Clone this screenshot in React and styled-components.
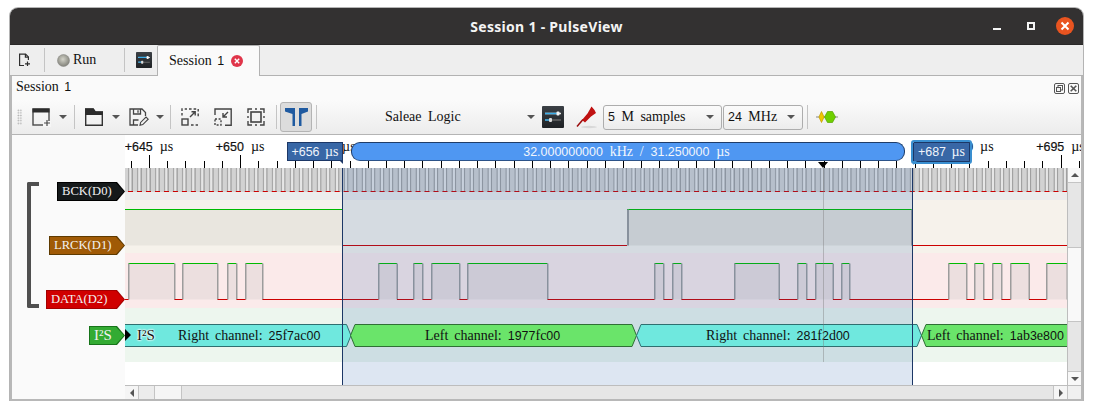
import React from 'react'
import styled, { createGlobalStyle } from 'styled-components'

const GlobalStyle = createGlobalStyle`
  html, body { margin: 0; padding: 0; background: #fff; }
  body { font-family: "Liberation Serif", serif; font-size: 14px; color: #111; overflow: hidden; }
`

// ---- qt-ish text, letters in serif, digits in sans, wide word gaps
const Digits = styled.span`
  font-family: "Liberation Sans", sans-serif;
  font-size: 0.89em;
`

const Txt = ({ children }) => (
  <>
    {String(children)
      .split(/([0-9+.]+)/)
      .map((part, i) => (i % 2 ? <Digits key={i}>{part}</Digits> : part))}
  </>
)

// ---- window
const Window = styled.div`
  position: relative;
  width: 1073px;
  height: 393px;
  margin: 8px 0 0 10px;
  border-radius: 8px 8px 0 0;
  box-shadow: 0 0 0 1px #b4b4b4;
  display: flex;
  flex-direction: column;
  overflow: hidden;
  word-spacing: 3px;
`

const TitleBar = styled.div`
  height: 37px;
  flex: none;
  background: #333131;
  border-bottom: 1px solid #2a2828;
  position: relative;
  display: flex;
  align-items: center;
  justify-content: center;
  box-sizing: border-box;
  color: #f4f4f4;
  font-family: "Noto Sans", sans-serif;
  font-weight: 700;
  font-size: 14px;
  letter-spacing: 0.3px;
  word-spacing: 0;
`

const WinControls = styled.div`
  position: absolute;
  right: 9px;
  top: 0;
  height: 36px;
  display: flex;
  align-items: center;
  gap: 21px;
`

const MinBtn = styled.span`
  width: 8px;
  height: 2px;
  margin-top: 5px;
  background: #f4f4f4;
`

const MaxBtn = styled.span`
  margin-left: 5px;
  border: 2px solid #f4f4f4;
  width: 4px;
  height: 4px;
`

const CloseBtn = styled.span`
  width: 18px;
  height: 18px;
  border-radius: 50%;
  background: #e95420;
  display: flex;
  align-items: center;
  justify-content: center;
`

const MainBar = styled.div`
  height: 31px;
  flex: none;
  box-sizing: border-box;
  background: #eeeeee;
  border-bottom: 1px solid #b2b2b2;
  display: flex;
  align-items: center;
  position: relative;
`

const RunButton = styled.div`
  display: flex;
  align-items: center;
  gap: 3px;
  width: 79px;
  padding-left: 12px;
  box-sizing: border-box;
  font-size: 14px;
`

const VSep = styled.span`
  width: 1px;
  flex: none;
  height: ${(p) => p.$h || 24}px;
  background: #c4c4c4;
  margin: ${(p) => p.$m || '0'};
`

const Tab = styled.div`
  width: 103px;
  height: 31px;
  margin-left: 5px;
  margin-bottom: -1px;
  box-sizing: border-box;
  background: #fafafa;
  border: 1px solid #b2b2b2;
  border-bottom: none;
  border-radius: 2px 2px 0 0;
  display: flex;
  align-items: center;
  padding-left: 11px;
  gap: 7px;
  font-size: 14px;
  z-index: 1;
  word-spacing: 2px;
`

const Panel = styled.div`
  flex: 1;
  min-height: 0;
  display: flex;
  flex-direction: column;
  border: 2px solid #b8b8b8;
  border-top: none;
  background: #fafafa;
`

const PanelHeader = styled.div`
  height: 24px;
  flex: none;
  box-sizing: border-box;
  display: flex;
  align-items: center;
  justify-content: space-between;
  padding: 0 2px 2px 4px;
  background: #fafafa;
  font-size: 14px;
  word-spacing: 2px;
`

const DockBtns = styled.div`
  display: flex;
  gap: 3px;
  margin-top: 2px;
`

const Toolbar = styled.div`
  height: 35px;
  flex: none;
  box-sizing: border-box;
  display: flex;
  align-items: center;
  border-bottom: 1px solid #b4b4b4;
  background: linear-gradient(#fbfbfb, #ececec);
  padding-left: 5px;
`

const Grip = styled.span`
  width: 5px;
  height: 16px;
  margin-right: 10px;
  flex: none;
  background-image: radial-gradient(circle, #a8a8a8 0.6px, transparent 1px);
  background-size: 2.6px 2.6px;
`

const Arrow = styled.span`
  width: 0;
  height: 0;
  flex: none;
  border-left: 4px solid transparent;
  border-right: 4px solid transparent;
  border-top: 4px solid #555;
  margin: ${(p) => p.$m || '0'};
`

const ToolIcon = styled.span`
  display: flex;
  flex: none;
  margin: ${(p) => p.$m || '0'};
`

const Toggled = styled.span`
  width: 32px;
  height: 30px;
  flex: none;
  box-sizing: border-box;
  display: flex;
  align-items: center;
  justify-content: center;
  background: #dcdcdc;
  border: 1px solid #b4b4b4;
  border-radius: 3px;
  margin: 0 4px 0 3px;
`

const DeviceSelect = styled.div`
  width: 150px;
  margin-left: 68px;
  margin-right: 7px;
  display: flex;
  align-items: center;
  justify-content: space-between;
  font-size: 14px;
  flex: none;
`

const Combo = styled.div`
  width: ${(p) => p.$w}px;
  height: 25px;
  flex: none;
  margin-left: ${(p) => p.$ml || 0}px;
  box-sizing: border-box;
  border: 1px solid #adadad;
  border-radius: 3px;
  background: linear-gradient(#fbfbfb, #ececec);
  display: flex;
  align-items: center;
  justify-content: space-between;
  padding: 0 7px 0 4px;
  font-size: 14px;
`

// ---- trace view
const View = styled.div`
  flex: 1;
  min-height: 0;
  position: relative;
  display: grid;
  grid-template-columns: 1fr 14px;
  grid-template-rows: 33px 217px 1fr;
`

const Ruler = styled.div`
  grid-column: 1 / 3;
  background: #fff;
  position: relative;
  margin-left: 113px;
  overflow: hidden;
`

const RulerTicks = styled.svg`
  position: absolute;
  left: 0;
  top: 0;
`

const TickLabel = styled.span`
  position: absolute;
  top: 4px;
  transform: translateX(-50%);
  white-space: nowrap;
  font-size: 14px;
  word-spacing: 2px;
  color: #111;
  -webkit-text-stroke: 0.2px #111;
`

const Unit = styled.span`
  font-family: "Liberation Serif", serif;
  margin-left: 7px;
  -webkit-text-stroke: 0;
`

const Rows = styled.div`
  position: relative;
  display: flex;
  flex-direction: column;
`

const Row = styled.div`
  height: ${(p) => p.$h}px;
  flex: none;
  display: grid;
  grid-template-columns: 113px 1fr;
`

const HeaderCell = styled.div`
  background: #fafafa;
  display: flex;
  justify-content: flex-end;
  align-items: flex-start;
  padding-top: ${(p) => p.$top}px;
  position: relative;
`

const Label = styled.div`
  height: 19px;
  width: ${(p) => p.$w}px;
  position: relative;
  background: ${(p) => p.$edge};
  clip-path: polygon(0 0, calc(100% - 8px) 0, 100% 50%, calc(100% - 8px) 100%, 0 100%);
  color: #f2f2f2;
  font-size: ${(p) => p.$fs || 12.6}px;
  line-height: 19px;
  word-spacing: 0;
  padding-left: 5px;
  box-sizing: border-box;
  z-index: 2;
  white-space: nowrap;

  &::before {
    content: '';
    position: absolute;
    inset: 1px;
    background: ${(p) => p.$bg};
    clip-path: polygon(0 0, calc(100% - 8px) 0, 100% 50%, calc(100% - 8px) 100%, 0 100%);
  }

  span.t {
    position: relative;
  }
`

const Band = styled.div`
  background: ${(p) => p.$bg};
  position: relative;
  overflow: hidden;
`

const Wave = styled.svg`
  position: absolute;
  left: 0;
  top: 0;
`

const Annot = styled.div`
  position: absolute;
  top: 16px;
  height: 23px;
  font-size: 14px;
  line-height: 23px;
  word-spacing: 2.5px;
  white-space: nowrap;
  z-index: 3;

  svg {
    position: absolute;
    left: 0;
    top: 0;
  }

  span.t {
    position: absolute;
    top: 0;
  }
`

const DecoderMark = styled.span`
  position: absolute;
  left: 0;
  top: 21px;
  width: 0;
  height: 0;
  border-top: 6px solid transparent;
  border-bottom: 6px solid transparent;
  border-left: 6px solid #000;
  z-index: 4;
`

const DecoderName = styled.span`
  position: absolute;
  left: 12px;
  top: 16px;
  font-size: 15px;
  line-height: 23px;
  z-index: 4;
  text-shadow: 0 0 2px #fff, 0 0 2px #fff, 0 0 2px #fff, 0 0 2px #fff;
`

const Selection = styled.div`
  position: absolute;
  left: 330px;
  top: 33px;
  width: 571px;
  height: 217px;
  background: rgba(28, 88, 168, 0.15);
  pointer-events: none;
  z-index: 2;
`

const SelectionEdge = styled.div`
  position: absolute;
  left: ${(p) => p.$x}px;
  top: 33px;
  width: 1px;
  height: 217px;
  background: #1c3766;
  z-index: 3;
`

const CursorLine = styled.div`
  position: absolute;
  left: 811px;
  top: 33px;
  width: 1px;
  height: 194px;
  background: rgba(120, 120, 120, 0.4);
  z-index: 3;
`

const CursorMark = styled.div`
  position: absolute;
  left: 806px;
  top: 27px;
  width: 0;
  height: 0;
  border-left: 5.5px solid transparent;
  border-right: 5.5px solid transparent;
  border-top: 6px solid #000;
  z-index: 3;
`

const Flag = styled.div`
  position: absolute;
  left: ${(p) => p.$x}px;
  top: ${(p) => p.$y}px;
  width: ${(p) => p.$w}px;
  height: ${(p) => p.$h}px;
  box-sizing: border-box;
  background: #3867a6;
  color: #f0f4fa;
  font-size: 14px;
  line-height: 17px;
  text-align: center;
  white-space: nowrap;
  word-spacing: 2px;
  border: 1px solid #1c3766;
  z-index: 4;
  ${(p) =>
    p.$selected &&
    `
    outline: 2px solid #3a8fd0;
    outline-offset: 0;
    border-radius: 1px;
  `}

  &::after {
    content: '';
    position: absolute;
    top: 100%;
    ${(p) => (p.$selected ? 'left: -1px;' : 'right: -1px;')}
    width: 0;
    height: 0;
    border-top: 4px solid ${(p) => (p.$selected ? '#3a8fd0' : '#1c3766')};
    ${(p) =>
      p.$selected
        ? 'border-right: 4px solid transparent; border-left: 0 solid transparent;'
        : 'border-left: 4px solid transparent; border-right: 0 solid transparent;'}
  }
`

const RangeBar = styled.div`
  position: absolute;
  left: 339px;
  top: 7px;
  width: 554px;
  height: 19px;
  box-sizing: border-box;
  background: #4f97f2;
  border: 1px solid #1f3c68;
  border-bottom-color: #2b5288;
  border-radius: 9px;
  color: #f2f6fc;
  font-size: 14px;
  line-height: 17px;
  text-align: center;
  word-spacing: 3.3px;
  padding-right: 3px;
  z-index: 3;
`

// ---- scrollbars
const VBar = styled.div`
  background: #e6e6e6;
  border-left: 1px solid #bdbdbd;
  display: flex;
  flex-direction: column;
`

const BarButton = styled.div`
  flex: none;
  height: ${(p) => p.$h}px;
  background: ${(p) => p.$bg || '#f8f8f8'};
  display: flex;
  align-items: center;
  justify-content: center;
  border-bottom: ${(p) => p.$line || 'none'};
  border-top: ${(p) => p.$lineTop || 'none'};
  box-sizing: border-box;
`

const BarRest = styled.div`
  flex: 1;
`

const UpArrow = styled.span`
  width: 0;
  height: 0;
  border-left: 4px solid transparent;
  border-right: 4px solid transparent;
  border-bottom: 4px solid #555;
`

const DownArrow = styled(UpArrow)`
  border-bottom: none;
  border-top: 4px solid #555;
`

const HBar = styled.div`
  grid-column: 1 / 3;
  display: flex;
  background: #fafafa;
  padding-left: 113px;
`

const HTrack = styled.div`
  flex: 1;
  display: flex;
  background: #e6e6e6;
  border-top: 1px solid #bdbdbd;
`

const HBtn = styled.div`
  width: ${(p) => p.$w}px;
  flex: none;
  box-sizing: border-box;
  display: flex;
  align-items: center;
  justify-content: center;
  background: ${(p) => p.$bg || 'transparent'};
  border-right: ${(p) => p.$line || 'none'};
  border-left: ${(p) => p.$lineLeft || 'none'};
`

const LeftArrow = styled.span`
  width: 0;
  height: 0;
  border-top: 4px solid transparent;
  border-bottom: 4px solid transparent;
  border-right: 4px solid #555;
`

const RightArrow = styled.span`
  width: 0;
  height: 0;
  border-top: 4px solid transparent;
  border-bottom: 4px solid transparent;
  border-left: 4px solid #555;
`

const GroupBracket = styled.div`
  position: absolute;
  left: 15px;
  top: 47px;
  width: 12px;
  height: 126px;
  box-sizing: border-box;
  border: 4px solid #4f4f4f;
  border-right: none;
  border-radius: 2px 0 0 2px;
  z-index: 2;
`

// ---- icons
const SettingsIcon = ({ size = 22 }) => (
  <svg width={size} height={size} viewBox="0 0 22 22">
    <defs>
      <linearGradient id="sg" x1="0" y1="0" x2="0" y2="1">
        <stop offset="0" stopColor="#3b4045" />
        <stop offset="1" stopColor="#1f2225" />
      </linearGradient>
    </defs>
    <rect width="22" height="22" rx="1" fill="url(#sg)" />
    <path d="M3 7.5h16" stroke="#e8e8e8" strokeWidth="1.4" />
    <path d="M3 7.5h12" stroke="#3daee9" strokeWidth="1.6" />
    <rect x="14.5" y="5.5" width="3" height="4" rx="1" fill="#f4f4f4" />
    <path d="M3 14h16" stroke="#666" strokeWidth="1.4" />
    <path d="M3 14h5" stroke="#3daee9" strokeWidth="1.6" />
    <rect x="7" y="12" width="3" height="4" rx="1" fill="#dcdcdc" />
  </svg>
)

const NewDocIcon = () => (
  <svg width="13" height="14" viewBox="0 0 13 14" fill="none" stroke="#2e2e2e" strokeWidth="1.2">
    <path d="M6 12.5H1.6V1.1h6l2.8 2.8V7" />
    <path d="M7.4 1.1v3h3" />
    <path d="M9.5 8.5v4.5M7 10.8h5" />
  </svg>
)

const NewViewIcon = () => (
  <svg width="20" height="19" viewBox="0 0 20 19">
    <rect x="1" y="1" width="16" height="16" fill="none" stroke="#4a4a4a" strokeWidth="1.4" />
    <rect x="0.5" y="0.5" width="17" height="4" fill="#2c2c2c" />
    <rect x="11" y="13" width="8" height="6" fill="#f6f6f6" />
    <path d="M15 12v6M12 15h6" stroke="#4a4a4a" strokeWidth="1.2" />
  </svg>
)

const FolderIcon = () => (
  <svg width="18" height="18" viewBox="0 0 18 18">
    <path d="M.7 1h7.5l2 3h7.1v13.3H.7z" fill="none" stroke="#333" strokeWidth="1.4" />
    <path d="M0 .4h8.5l2.2 3.2H18V7H0z" fill="#2b2b2b" />
  </svg>
)

const SaveIcon = () => (
  <svg width="20" height="18" viewBox="0 0 20 18" fill="none" stroke="#444" strokeWidth="1.3">
    <path d="M9 17H1V1h12l3.5 3.5V8" />
    <path d="M4.5 1v5h7V1M9 2.2v2.6" />
    <path d="M4.5 17v-5h5" />
    <path d="M11 17.2l.6-2.8 5.4-5.4 2.2 2.2-5.4 5.4z" strokeWidth="1.1" />
  </svg>
)

const ZoomFitIcon = () => (
  <svg width="18" height="18" viewBox="0 0 18 18" fill="none" stroke="#444" strokeWidth="1.4">
    <path d="M8 1h9.2v9.3" strokeDasharray="2.6 2" />
    <path d="M1 7.5V1h5" strokeDasharray="2.6 2" />
    <rect x="1" y="11" width="6" height="6" />
    <path d="M9 9l5-5M10.5 3.8h3.7v3.7" />
    <path d="M10 17h7" strokeDasharray="2.6 2" />
  </svg>
)

const ZoomOneIcon = () => (
  <svg width="18" height="18" viewBox="0 0 18 18" fill="none" stroke="#444" strokeWidth="1.4">
    <path d="M1 7V1h16.2v16.2H11" />
    <rect x="1" y="11" width="6" height="6" strokeDasharray="2 1.6" />
    <path d="M14 4L9 9M9 5v4h4" />
  </svg>
)

const ZoomSelIcon = () => (
  <svg width="18" height="18" viewBox="0 0 18 18" fill="none" stroke="#444" strokeWidth="1.4">
    <rect x="4" y="4" width="10" height="10" strokeWidth="1.6" />
    <path d="M1 5V1h4M13 1h4v4M17 13v4h-4M5 17H1v-4" />
    <path d="M8 1h2M8 17h2M1 8v2M17 8v2" />
  </svg>
)

const CursorsIcon = () => (
  <svg width="23" height="18" viewBox="0 0 23 18" fill="#1f5aa0">
    <path d="M0 0h10v18H7.5V6L0 3.5z" />
    <path d="M14 0h9v3.5L16.5 6v12H14z" />
  </svg>
)

const ProbeIcon = () => (
  <svg width="22" height="24" viewBox="0 0 22 24">
    <ellipse cx="13" cy="22" rx="8" ry="1.2" fill="#d8d8d8" />
    <path d="M1 21.5l6-7" stroke="#9a0c0c" strokeWidth="1.5" />
    <path d="M6 15l3 2.5 6-6 5-3.5-1.5-3-3-3.5-4 7z" fill="#c01212" />
  </svg>
)

const DecoderIcon = () => (
  <svg width="22" height="12" viewBox="0 0 22 12">
    <path d="M0 6h22" stroke="#888" strokeWidth="1" />
    <path d="M5.5 .5l2.6 5.5-2.6 5.5-2.6-5.5z" fill="#f0c800" stroke="#c09a00" strokeWidth=".7" />
    <path d="M11.5 .5h5l3 5.5-3 5.5h-5l-3-5.5z" fill="#6fd000" stroke="#55a000" strokeWidth=".7" />
  </svg>
)

const LedIcon = () => (
  <svg width="13" height="13" viewBox="0 0 13 13">
    <defs>
      <radialGradient id="led" cx="0.45" cy="0.4" r="0.6">
        <stop offset="0" stopColor="#d2d2c8" />
        <stop offset="1" stopColor="#82827a" />
      </radialGradient>
    </defs>
    <circle cx="6.5" cy="6.5" r="6" fill="url(#led)" stroke="#8c8c86" strokeWidth=".6" />
  </svg>
)

const TabCloseIcon = () => (
  <svg width="12" height="12" viewBox="0 0 12 12">
    <circle cx="6" cy="6" r="6" fill="#e0354a" />
    <path d="M3.8 3.8l4.4 4.4M8.2 3.8l-4.4 4.4" stroke="#fff" strokeWidth="1.4" />
  </svg>
)

const DockFloatIcon = () => (
  <svg width="11" height="11" viewBox="0 0 11 11" fill="none" stroke="#555" strokeWidth="1">
    <rect x=".5" y=".5" width="10" height="10" rx="1.5" />
    <rect x="4" y="2.5" width="4.5" height="4.5" />
    <rect x="2.5" y="4.5" width="4" height="4" fill="#f4f4f4" />
  </svg>
)

const DockCloseIcon = () => (
  <svg width="11" height="11" viewBox="0 0 11 11" fill="none" stroke="#555" strokeWidth="1">
    <rect x=".5" y=".5" width="10" height="10" rx="1.5" />
    <path d="M2.7 2.7l5.6 5.6M8.3 2.7l-5.6 5.6" strokeWidth="1.6" />
  </svg>
)

// ---- data, all x values are relative to the trace area (left edge at 125)
const TRACE_W = 942
const PX_PER_5US = 91.15
const ORIGIN = 24 // x of the +645 tick
const GREEN = '#00bb00'
const RED = '#cc0000'

const ticks = Array.from({ length: 57 }, (_, i) => ORIGIN + ((i - 1) * PX_PER_5US) / 5)
const labels = Array.from({ length: 11 }, (_, i) => ({
  x: ORIGIN + i * PX_PER_5US,
  text: '+' + (645 + i * 5),
}))

const dataPulses = [
  [128.5, 174.5], [182.5, 217.5], [227.5, 236.5], [245.5, 262.5],
  [378.5, 397], [413.5, 422.5], [431.5, 459.5], [467.5, 547.5],
  [654.5, 663.5], [672.5, 681.5], [734.5, 779], [797.5, 806.5],
  [815.5, 833], [841.5, 849.5], [948.5, 966.5], [974.5, 983.5],
  [992.5, 1001.5], [1010.5, 1029], [1046.5, 1067],
].map(([a, b]) => [a - 125, b - 125])

const annots = [
  { from: -10, to: 226.5, kind: 'r', text: 'Right channel: 25f7ac00', tx: 53 },
  { from: 224.5, to: 511.5, kind: 'l', text: 'Left channel: 1977fc00', tx: 300 },
  { from: 510.5, to: 796.5, kind: 'r', text: 'Right channel: 281f2d00', tx: 581 },
  { from: 795.5, to: 960, kind: 'l', text: 'Left channel: 1ab3e800', tx: 802 },
]

const annotColors = {
  r: { fill: '#6fe8de', line: '#2f6f70' },
  l: { fill: '#6ae46a', line: '#2f6f35' },
}

function hexPoints(w, h) {
  const d = 5
  const m = h / 2
  return `.5,${m} ${d},.5 ${w - d},.5 ${w - 0.5},${m} ${w - d},${h - 0.5} ${d},${h - 0.5}`
}

function BckWave() {
  const p = 8.985
  const items = []
  for (let i = -1; i < 105; i++) {
    const x = 3 + i * p
    items.push(<rect key={'a' + i} x={x} y="0" width="1.5" height="24" fill="#a8a8a8" />)
    items.push(<rect key={'b' + i} x={x + 1.5} y="0" width="2" height="24" fill="#e6e6e6" />)
    items.push(<rect key={'c' + i} x={x + 3.5} y="0" width="1.5" height="24" fill="#a0a0a0" />)
    items.push(<rect key={'d' + i} x={x + 5} y="0" width="4" height="24" fill="#d2d2d2" />)
    items.push(<rect key={'e' + i} x={x} y="23" width="5" height="1" fill={RED} />)
  }
  return (
    <Wave width={TRACE_W} height="32">
      {items}
    </Wave>
  )
}

function LrckWave() {
  const hi = 9.5
  const lo = 45.5
  return (
    <Wave width={TRACE_W} height="53">
      <rect x="0" y={hi} width="217" height={lo - hi} fill="#e9e6df" />
      <rect x="502" y={hi} width="285" height={lo - hi} fill="#e4e1da" />
      <path d={`M0 ${hi}H217`} stroke={GREEN} fill="none" />
      <path d={`M217 ${lo}H502`} stroke={RED} fill="none" />
      <path d={`M502 ${hi}H787`} stroke={GREEN} fill="none" />
      <path d={`M787 ${lo}H${TRACE_W}`} stroke={RED} fill="none" />
      {[502, 786].map((x) => (
        <rect key={x} x={x} y={hi} width="2" height={lo - hi} fill="#9c9c9c" />
      ))}
    </Wave>
  )
}

function DataWave() {
  const hi = 10.5
  const lo = 46.5
  let low = `M0 ${lo}`
  dataPulses.forEach(([a, b]) => {
    low += `H${a}M${b} ${lo}`
  })
  low += `H${TRACE_W}`
  return (
    <Wave width={TRACE_W} height="55">
      {dataPulses.map(([a, b]) => (
        <g key={a}>
          <rect x={a} y={hi} width={b - a} height={lo - hi} fill="#ecdfdf" />
          <path d={`M${a} ${hi}H${b}`} stroke={GREEN} fill="none" />
          <rect x={a - 0.5} y={hi} width="1.5" height={lo - hi} fill="#9c9c9c" />
          <rect x={b - 0.5} y={hi} width="1.5" height={lo - hi} fill="#9c9c9c" />
        </g>
      ))}
      <path d={low} stroke={RED} fill="none" />
    </Wave>
  )
}

function Annotation({ a }) {
  const w = a.to - a.from
  const c = annotColors[a.kind]
  return (
    <Annot style={{ left: a.from, width: w }}>
      <svg width={w} height="23">
        <polygon points={hexPoints(w, 23)} fill={c.fill} stroke={c.line} strokeWidth="1" />
      </svg>
      <span className="t" style={{ left: a.tx - a.from }}>
        <Txt>{a.text}</Txt>
      </span>
    </Annot>
  )
}

export default function App() {
  return (
    <>
      <GlobalStyle />
      <Window>
        <TitleBar>
          Session 1 - PulseView
          <WinControls>
            <MinBtn />
            <MaxBtn />
            <CloseBtn>
              <svg width="10" height="10" viewBox="0 0 10 10">
                <path d="M1.5 1.5l7 7M8.5 1.5l-7 7" stroke="#fff" strokeWidth="2" />
              </svg>
            </CloseBtn>
          </WinControls>
        </TitleBar>

        <MainBar>
          <ToolIcon $m="0 13px 0 8px">
            <NewDocIcon />
          </ToolIcon>
          <VSep />
          <RunButton>
            <LedIcon />
            <span>Run</span>
          </RunButton>
          <VSep />
          <ToolIcon $m="0 0 0 11px">
            <SettingsIcon size={16} />
          </ToolIcon>
          <Tab>
            <span><Txt>Session 1</Txt></span>
            <TabCloseIcon />
          </Tab>
        </MainBar>

        <Panel>
          <PanelHeader>
            <span><Txt>Session 1</Txt></span>
            <DockBtns>
              <DockFloatIcon />
              <DockCloseIcon />
            </DockBtns>
          </PanelHeader>

          <Toolbar>
            <Grip />
            <NewViewIcon />
            <Arrow $m="0 7px 0 7px" />
            <VSep $m="0 10px 0 0" />
            <FolderIcon />
            <Arrow $m="0 9px 0 9px" />
            <SaveIcon />
            <Arrow $m="0 6px 0 7px" />
            <VSep />
            <ToolIcon $m="0 0 0 10px"><ZoomFitIcon /></ToolIcon>
            <ToolIcon $m="0 0 0 15px"><ZoomOneIcon /></ToolIcon>
            <ToolIcon $m="0 11px 0 15px"><ZoomSelIcon /></ToolIcon>
            <VSep />
            <Toggled><CursorsIcon /></Toggled>
            <VSep />
            <DeviceSelect>
              <span>Saleae Logic</span>
              <Arrow />
            </DeviceSelect>
            <SettingsIcon />
            <ToolIcon $m="0 5px 0 12px"><ProbeIcon /></ToolIcon>
            <Combo $w={119}>
              <span><Txt>5 M samples</Txt></span>
              <Arrow />
            </Combo>
            <Combo $w={80} $ml={1}>
              <span><Txt>24 MHz</Txt></span>
              <Arrow />
            </Combo>
            <VSep $m="0 8px 0 4px" />
            <DecoderIcon />
          </Toolbar>

          <View>
            <Ruler>
              <RulerTicks width="956" height="33">
                {ticks.map((x, i) => {
                  const major = (i - 1) % 5 === 0
                  const px = Math.round(x) + 0.5
                  return <path key={i} d={`M${px} ${major ? 20 : 26}V33`} stroke="#000" strokeWidth="1" />
                })}
              </RulerTicks>
              {labels.map((l) => (
                <TickLabel key={l.text} style={{ left: l.x }}>
                  <Txt>{l.text}</Txt>
                  <Unit>µs</Unit>
                </TickLabel>
              ))}
            </Ruler>

            <Rows>
              <Row $h={32}>
                <HeaderCell $top={14}>
                  <Label $w={68} $edge="#000" $bg="#15191a">
                    <span className="t">BCK(D0)</span>
                  </Label>
                </HeaderCell>
                <Band $bg="#ececec"><BckWave /></Band>
              </Row>
              <Row $h={53}>
                <HeaderCell $top={36}>
                  <Label $w={76} $edge="#5e3a00" $bg="#a05a06">
                    <span className="t">LRCK(D1)</span>
                  </Label>
                </HeaderCell>
                <Band $bg="#f6f2eb"><LrckWave /></Band>
              </Row>
              <Row $h={55}>
                <HeaderCell $top={37}>
                  <Label $w={79} $edge="#a40000" $bg="#d00000">
                    <span className="t">DATA(D2)</span>
                  </Label>
                </HeaderCell>
                <Band $bg="#fbeaea"><DataWave /></Band>
              </Row>
              <Row $h={54}>
                <HeaderCell $top={18}>
                  <Label $w={36} $edge="#17741a" $bg="#33ab33" $fs={15}>
                    <span className="t">I²S</span>
                  </Label>
                </HeaderCell>
                <Band $bg="#edf6ee">
                  {annots.map((a) => (
                    <Annotation key={a.text} a={a} />
                  ))}
                  <DecoderMark />
                  <DecoderName>I²S</DecoderName>
                </Band>
              </Row>
              <Row $h={23}>
                <HeaderCell $top={0} />
                <Band $bg="#fff" />
              </Row>
            </Rows>

            <VBar>
              <BarButton $h={14}><UpArrow /></BarButton>
              <BarButton $h={65} $bg="#e6e6e6" $lineTop="1px solid #c4c4c4" />
              <BarButton $h={75} $bg="#f9f9f9" $lineTop="1px solid #c4c4c4" $line="1px solid #c4c4c4" />
              <BarRest />
              <BarButton $h={14} $lineTop="1px solid #c4c4c4"><DownArrow /></BarButton>
            </VBar>

            <HBar>
              <HTrack>
                <HBtn $w={14} $bg="#f5f5f5" $line="1px solid #c4c4c4"><LeftArrow /></HBtn>
                <HBtn $w={16} $line="1px solid #c4c4c4" $bg="#ececec" />
                <HBtn $w={27} $line="1px solid #c4c4c4" $bg="#f5f5f5" />
                <BarRest />
                <HBtn $w={14} $bg="#f5f5f5" $lineLeft="1px solid #c4c4c4"><RightArrow /></HBtn>
                <HBtn $w={14} $bg="#f0f0f0" $lineLeft="1px solid #c4c4c4" />
              </HTrack>
            </HBar>

            <GroupBracket />
            <Selection />
            <SelectionEdge $x={330} />
            <SelectionEdge $x={900} />
            <CursorLine />
            <CursorMark />
            <RangeBar>
              <Txt>32.000000000 kHz / 31.250000 µs</Txt>
            </RangeBar>
            <Flag $x={275} $y={7} $w={56} $h={19}>
              <Txt>+656 </Txt>µs
            </Flag>
            <Flag $x={901} $y={7} $w={57} $h={20} $selected>
              <Txt>+687 </Txt>µs
            </Flag>
          </View>
        </Panel>
      </Window>
    </>
  )
}
